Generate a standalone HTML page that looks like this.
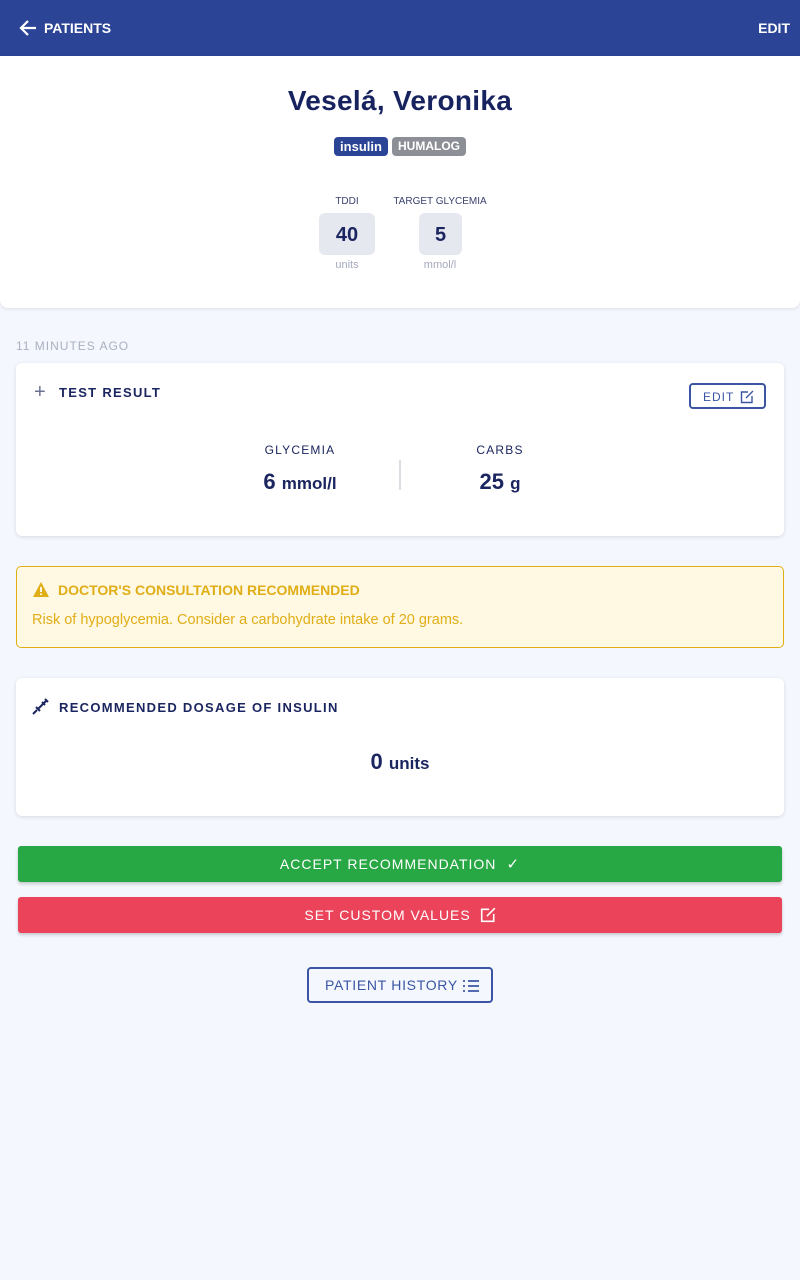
<!DOCTYPE html>
<html><head><meta charset="utf-8"><style>
*{box-sizing:border-box;margin:0;padding:0}
body{width:800px;height:1280px;background:#f4f8fe;font-family:"Liberation Sans",sans-serif;color:#1b2660;position:relative;overflow:hidden}
.hdr{position:absolute;left:0;top:0;width:800px;height:56px;background:#2c4496;color:#fff;font-weight:bold;font-size:14px}
.abs{position:absolute}
.card{position:absolute;background:#fff;border-radius:6px;box-shadow:0 1px 4px rgba(0,0,0,.12)}
.c{text-align:center}
.lbl{font-size:13px;letter-spacing:1.3px;font-weight:bold}
</style></head><body>
<div class="hdr">
<svg class="abs" style="left:18px;top:18px" width="20" height="20" viewBox="0 0 20 20"><path d="M18 10H3M10 3L3 10l7 7" stroke="#fff" stroke-width="2.2" fill="none"/></svg>
<div class="abs" style="left:44px;top:20px">PATIENTS</div>
<div class="abs" style="right:10px;top:20px">EDIT</div>
</div>
<div class="abs" style="left:0;top:56px;width:800px;height:252px;background:#fff;border-radius:0 0 8px 8px;box-shadow:0 1px 4px rgba(0,0,0,.1)"></div>
<div class="abs c" style="left:0;top:85px;width:800px;font-size:28px;font-weight:bold;color:#17235f;letter-spacing:0.3px">Veselá, Veronika</div>
<div class="abs" style="left:334px;top:137px;width:54px;height:19px;background:#2c4496;color:#fff;border-radius:4px;font-size:13px;font-weight:bold;text-align:center;line-height:19px">insulin</div>
<div class="abs" style="left:392px;top:137px;width:74px;height:19px;background:#8d8f96;color:#fff;border-radius:4px;font-size:12px;font-weight:bold;text-align:center;line-height:19px">HUMALOG</div>
<div class="abs c" style="left:319px;top:196px;width:56px;font-size:10px;color:#3a4270">TDDI</div>
<div class="abs c" style="left:319px;top:213px;width:56px;height:42px;background:#e6e8f0;border-radius:6px;font-size:20px;font-weight:bold;line-height:44px">40</div>
<div class="abs c" style="left:319px;top:259px;width:56px;font-size:11px;color:#a5a8bc">units</div>
<div class="abs c" style="left:390px;top:196px;width:100px;font-size:10px;color:#3a4270">TARGET GLYCEMIA</div>
<div class="abs c" style="left:419px;top:213px;width:43px;height:42px;background:#e6e8f0;border-radius:6px;font-size:20px;font-weight:bold;line-height:44px">5</div>
<div class="abs c" style="left:390px;top:259px;width:100px;font-size:11px;color:#a5a8bc">mmol/l</div>

<div class="abs" style="left:16px;top:339px;font-size:12px;color:#a9afbf;letter-spacing:1px">11 MINUTES AGO</div>
<div class="card" style="left:16px;top:363px;width:768px;height:173px"></div>
<div class="abs" style="left:34px;top:381px;font-size:20px;color:#6a7090">+</div>
<div class="abs lbl" style="left:59px;top:385px">TEST RESULT</div>
<div class="abs" style="left:689px;top:383px;width:77px;height:26px;border:2px solid #3b55a4;border-radius:4px;color:#3b55a4;font-size:12px;letter-spacing:1px;padding:5px 0 0 12px">EDIT
<svg class="abs" style="left:49px;top:5px" width="14" height="14" viewBox="0 0 14 14"><path d="M8 2H1.5v10.5H12V6M6 8l7-7" stroke="#3b55a4" stroke-width="1.4" fill="none"/></svg></div>
<div class="abs c" style="left:200px;top:443px;width:200px;font-size:12px;letter-spacing:1.2px">GLYCEMIA</div>
<div class="abs c" style="left:200px;top:469px;width:200px;font-size:22px;font-weight:bold">6 <span style="font-size:17px">mmol/l</span></div>
<div class="abs" style="left:399px;top:460px;width:2px;height:30px;background:#dcdde3"></div>
<div class="abs c" style="left:400px;top:443px;width:200px;font-size:12px;letter-spacing:1.2px">CARBS</div>
<div class="abs c" style="left:400px;top:469px;width:200px;font-size:22px;font-weight:bold">25 <span style="font-size:17px">g</span></div>

<div class="abs" style="left:16px;top:566px;width:768px;height:82px;background:#fff8e3;border:1px solid #e0ae17;border-radius:5px"></div>
<svg class="abs" style="left:33px;top:582px" width="16" height="15" viewBox="0 0 16 15"><path d="M8 0L16 15H0z" fill="#e0ae17"/><path d="M8 5v5M8 11.5v1.5" stroke="#fff" stroke-width="1.8"/></svg>
<div class="abs" style="left:58px;top:582px;font-size:14px;font-weight:bold;color:#e0ae17">DOCTOR'S CONSULTATION RECOMMENDED</div>
<div class="abs" style="left:32px;top:612px;font-size:14.5px;color:#e0ae17">Risk of hypoglycemia. Consider a carbohydrate intake of 20 grams.</div>

<div class="card" style="left:16px;top:678px;width:768px;height:138px"></div>
<svg class="abs" style="left:31px;top:697px" width="19" height="19" viewBox="0 0 19 19"><path d="M2 17l4-4M5 10l4 4M7 12l7-7M11 5l3 3M14 2l3 3M15.5 3.5l-2 2" stroke="#1b2660" stroke-width="2" fill="none"/></svg>
<div class="abs lbl" style="left:59px;top:700px">RECOMMENDED DOSAGE OF INSULIN</div>
<div class="abs c" style="left:0;top:749px;width:800px;font-size:22px;font-weight:bold">0 <span style="font-size:17px">units</span></div>

<div class="abs c" style="left:18px;top:846px;width:764px;height:36px;background:#28a745;border-radius:3px;box-shadow:0 2px 3px rgba(0,0,0,.2);color:#fff;font-size:14px;letter-spacing:1px;line-height:36px">ACCEPT RECOMMENDATION <span style="font-size:15px">&nbsp;✓</span></div>
<div class="abs c" style="left:18px;top:897px;width:764px;height:36px;background:#ea435a;border-radius:3px;box-shadow:0 2px 3px rgba(0,0,0,.2);color:#fff;font-size:14px;letter-spacing:1px;line-height:36px">SET CUSTOM VALUES <svg width="16" height="16" viewBox="0 0 14 14" style="vertical-align:-3px;margin-left:4px"><path d="M8 2H1.5v10.5H12V6M6 8l7-7" stroke="#fff" stroke-width="1.4" fill="none"/></svg></div>
<div class="abs" style="left:307px;top:967px;width:186px;height:36px;border:2px solid #3b55a4;border-radius:4px;color:#3b55a4;font-size:14px;letter-spacing:0.7px;line-height:32px;padding-left:16px">PATIENT HISTORY
<svg class="abs" style="left:153px;top:10px" width="18" height="14" viewBox="0 0 18 14"><path d="M6 2h11M6 7h11M6 12h11M1 2h2M1 7h2M1 12h2" stroke="#3b55a4" stroke-width="1.8"/></svg></div>
</body></html>
